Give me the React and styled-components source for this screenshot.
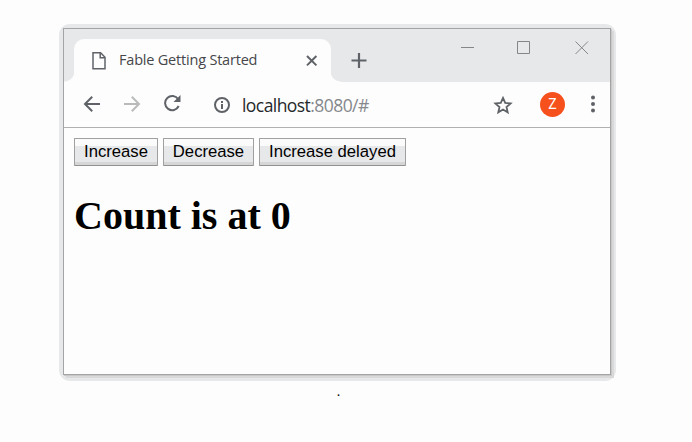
import React, { useState } from "react";
import styled, { createGlobalStyle } from "styled-components";

const GlobalStyle = createGlobalStyle`
  * { box-sizing: border-box; }
  body { margin: 0; background: #fdfdfd; overflow: hidden; }
`;

const Page = styled.main`
  width: 692px;
  height: 442px;
  padding: 24px 0 0 59px;
  background: #fdfdfd;
`;

const WindowShade = styled.div`
  width: 557px;
  height: 357px;
  padding: 4px;
  border-radius: 11px;
  background: #e7e8e9;
`;

const BrowserWindow = styled.section`
  width: 548px;
  height: 347px;
  border: 1px solid #a3a4a6;
  background: #fdfdfd;
  box-shadow: 1px 1px 0 0 #c8c8c8, 3px 3px 0 0 #d9d9d9;
`;

const TitleBar = styled.header`
  display: flex;
  height: 53px;
  padding: 10px 0 0 10px;
  background: #e7e8ea;
`;

const Tab = styled.div`
  position: relative;
  display: flex;
  align-items: center;
  width: 257px;
  height: 43px;
  padding-left: 18px;
  border-radius: 10px 10px 0 0;
  background: #fdfdfd;

  &::before, &::after {
    content: "";
    position: absolute;
    bottom: 0;
    width: 10px;
    height: 12px;
  }
  &::before {
    left: -10px;
    background: radial-gradient(circle at 0 1px, transparent 10px, #fdfdfd 11px);
  }
  &::after {
    right: -10px;
    background: radial-gradient(circle at 10px 1px, transparent 10px, #fdfdfd 11px);
  }
`;

const TabTitle = styled.span`
  width: 139px;
  margin-left: 13px;
  margin-top: -1px;
  font: 14.5px/20px "Open Sans", sans-serif;
  letter-spacing: -0.2px;
  color: #45474a;
  white-space: nowrap;
`;

const Icon = styled.svg`
  display: block;
  flex: none;
  margin-left: ${(p) => p.$gap || 0}px;
  margin-top: ${(p) => p.$drop || 0}px;
  fill: none;
  stroke: ${(p) => p.$color || "#5f6368"};
  stroke-width: ${(p) => p.$weight || 2};
`;

const Toolbar = styled.nav`
  display: flex;
  align-items: center;
  height: 46px;
  padding-left: 18px;
  border-bottom: 1px solid #b0b0b1;
`;

const Address = styled.div`
  width: 128px;
  margin-left: 12px;
  font: 17.5px/24px "Open Sans", sans-serif;
  letter-spacing: -0.56px;
  color: #26282b;
  white-space: nowrap;
`;

const Port = styled.span`
  color: #85888c;
`;

const Avatar = styled.div`
  display: grid;
  place-items: center;
  width: 25px;
  height: 25px;
  margin-left: 27px;
  border-radius: 50%;
  background: #f6511d;
  font: 14px/25px Roboto, sans-serif;
  color: #fff;
`;

const Content = styled.div`
  padding: 10px;
`;

const Actions = styled.div`
  display: flex;
  gap: 5px;
`;

const Button = styled.button`
  width: ${(p) => p.$width}px;
  height: 28px;
  padding: 0 0 1px;
  border: 1px solid #a0a0a1;
  border-bottom-color: #929293;
  border-radius: 1px;
  background: linear-gradient(#fbfbfb 0 7px, #e7e8ea 7px 23px, #d6d6d7 23px);
  font: 16.67px/24px "Liberation Sans", Arial, sans-serif;
  color: #000;
  white-space: nowrap;
`;

const Count = styled.h1`
  margin: 27px 0 0;
  font: bold 40px/46px "Liberation Serif", "Times New Roman", serif;
  color: #000;
`;

const Caption = styled.p`
  width: 557px;
  margin: 3px 0 0;
  padding-left: 2px;
  font: 14px/16px "Liberation Serif", serif;
  text-align: center;
  color: #000;
`;

export default function App() {
  const [count, setCount] = useState(0);
  const increase = () => setCount((value) => value + 1);

  return (
    <>
      <GlobalStyle />
      <Page>
        <WindowShade>
          <BrowserWindow>
            <TitleBar>
              <Tab>
                <Icon width="14" height="18" viewBox="0 0 14 18" $weight={1.5}>
                  <path d="M1 .8h7.6L13 5.2v11.6H1zM8.2 1v4.7H13" />
                </Icon>
                <TabTitle>Fable Getting Started</TabTitle>
                <Icon width="12" height="12" viewBox="0 0 12 12" $gap={48}>
                  <path d="M1 1l9.4 9.4M10.4 1L1 10.4" />
                </Icon>
              </Tab>
              <Icon width="16" height="16" viewBox="0 0 16 16" $gap={20} $drop={14}>
                <path d="M8 0v15M.5 7.5h15" strokeWidth="2.2" />
              </Icon>
              <Icon width="14" height="14" viewBox="0 0 14 14" $gap={94} $drop={2} $weight={1} $color="#858688">
                <path d="M0 6.5h13" />
              </Icon>
              <Icon width="14" height="14" viewBox="0 0 14 14" $gap={42} $drop={2} $weight={1} $color="#858688">
                <path d="M.5.5h12v12H.5z" />
              </Icon>
              <Icon width="14" height="14" viewBox="0 0 14 14" $gap={44} $drop={2} $weight={1} $color="#858688">
                <path d="M.5.5l12.5 12.5M13 .5L.5 13" />
              </Icon>
            </TitleBar>
            <Toolbar>
              <Icon width="18" height="16" viewBox="0 0 18 16" $gap={1} $drop={-1}>
                <path d="M17 8H2M9.2.8L2 8l7.2 7.2" />
              </Icon>
              <Icon width="18" height="16" viewBox="0 0 18 16" $gap={22} $drop={-1} $color="#b9babc">
                <path d="M1 8h15M8.8.8L16 8l-7.2 7.2" />
              </Icon>
              <Icon width="18" height="18" viewBox="0 0 18 18" $gap={22} $drop={-1}>
                <path d="M15.2 4.3A7.1 7.1 0 1 0 15.7 11" />
                <path d="M17.5 0v7h-7z" fill="#5f6368" stroke="none" />
              </Icon>
              <Icon width="16" height="16" viewBox="0 0 16 16" $gap={33}>
                <circle cx="8" cy="8" r="7" />
                <path d="M8 7v5M8 4v2" />
              </Icon>
              <Address>
                localhost<Port>:8080/#</Port>
              </Address>
              <Icon width="20" height="20" viewBox="0 0 20 20" $gap={123} $weight={1.8}>
                <path d="M10 2.9l2.2 5 5.4.5-4.1 3.6 1.2 5.3-4.7-2.8-4.7 2.8 1.2-5.3-4.1-3.6 5.4-.5z" />
              </Icon>
              <Avatar>Z</Avatar>
              <Icon width="4" height="18" viewBox="0 0 4 18" $gap={26} $drop={-1}>
                <g fill="#5f6368" stroke="none">
                  <circle cx="2" cy="2.5" r="2" />
                  <circle cx="2" cy="9" r="2" />
                  <circle cx="2" cy="15.5" r="2" />
                </g>
              </Icon>
            </Toolbar>
            <Content>
              <Actions>
                <Button $width={84} onClick={increase}>Increase</Button>
                <Button $width={91} onClick={() => setCount(count - 1)}>Decrease</Button>
                <Button $width={147} onClick={() => setTimeout(increase, 1000)}>Increase delayed</Button>
              </Actions>
              <Count>Count is at {count}</Count>
            </Content>
          </BrowserWindow>
        </WindowShade>
        <Caption>.</Caption>
      </Page>
    </>
  );
}
